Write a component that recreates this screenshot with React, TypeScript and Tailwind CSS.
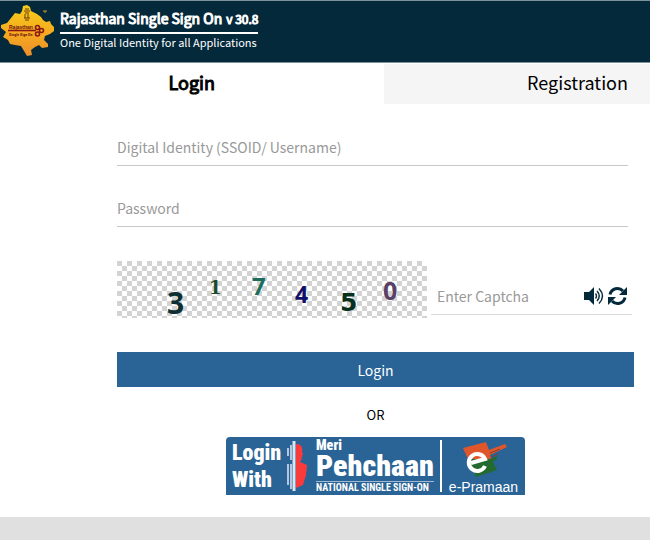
import { useState } from "react";

const CAPTCHA_DIGITS = [
  { value: "3", x: 50, y: 53, size: 30, color: "#0b2f33", font: "Open Sans", weight: 700 },
  { value: "1", x: 92, y: 33, size: 18, color: "#1d4a2c", font: "DejaVu Serif", weight: 700 },
  { value: "7", x: 135, y: 34, size: 24, color: "#1c6e5c", font: "Open Sans", weight: 700 },
  { value: "4", x: 178, y: 42, size: 23, color: "#10106a", font: "Open Sans", weight: 700 },
  { value: "5", x: 223, y: 50, size: 25, color: "#06301c", font: "DejaVu Sans", weight: 700 },
  { value: "0", x: 266, y: 39, size: 25, color: "#5a3f66", font: "Open Sans", weight: 700 },
];

function RajasthanLogo() {
  return (
    <svg viewBox="0 0 54 58" className="h-[58px] w-[54px] shrink-0 self-start" aria-hidden="true">
      <defs>
        <linearGradient id="map" x1="0" y1="0" x2="0" y2="1">
          <stop offset="0" stopColor="#f7cf1b" />
          <stop offset="0.5" stopColor="#f5ae1e" />
          <stop offset="1" stopColor="#ee8f2b" />
        </linearGradient>
      </defs>
      <path
        fill="url(#map)"
        d="M23 5L27 4L30 6L31 10L37 13L41 16L43 19L46 21L50 20L51 23L54 26L54 30L50 33L45 35L44 39L48 43L48 46L42 47L39 44L35 46L31 49L32 54L27 55L24 50L21 45L15 44L10 43L8 39L3 36L6 31L1 27L1 24L7 22L11 17L15 12L20 13L22 10Z"
      />
      <g stroke="#6b3b10" strokeWidth="1" fill="none">
        <path d="M25 8h4M24 10h6M25 12h4M25 13v4M28 13v4M24 17h6M25 19h4" />
      </g>
      <path d="M43 10h4M45 10v2" stroke="#c99a2c" strokeWidth="1" />
      <path d="M8 29.500h28" stroke="#8c1616" strokeWidth="1.6" />
      <g fill="none" stroke="#8c1616" strokeWidth="1.6">
        <circle cx="37.500" cy="26.500" r="2" />
        <circle cx="37.500" cy="33" r="2" />
        <circle cx="41.500" cy="29.500" r="2" />
      </g>
      <text x="9" y="28" fontSize="5" fontWeight="700" fill="#6e1010" fontFamily="Liberation Sans, sans-serif">Rajasthan</text>
      <text x="9" y="35" fontSize="4" fontWeight="700" fill="#6e1010" fontFamily="Roboto Condensed, sans-serif">Single Sign On</text>
    </svg>
  );
}

function CaptchaImage() {
  return (
    <svg viewBox="0 0 310 57" className="h-[57px] w-[310px] shrink-0 overflow-visible" role="img" aria-label="Captcha">
      <defs>
        <pattern id="checker" width="10" height="10" patternUnits="userSpaceOnUse">
          <rect width="10" height="10" fill="#fff" />
          <path d="M0 0h5v5H0zM5 5h5v5H5z" fill="#d3d3d3" />
        </pattern>
      </defs>
      <rect width="310" height="57" fill="url(#checker)" />
      {CAPTCHA_DIGITS.map((digit) => (
        <text
          key={digit.value}
          x={digit.x}
          y={digit.y}
          fontSize={digit.size}
          fontWeight={digit.weight}
          fontFamily={digit.font}
          fill={digit.color}
        >
          {digit.value}
        </text>
      ))}
    </svg>
  );
}

function SpeakerIcon() {
  return (
    <svg viewBox="0 0 20 18" className="h-[18px] w-5" aria-hidden="true">
      <path d="M0 5h5l5-5v18l-5-5H0z" fill="#04293a" />
      <g fill="none" stroke="#04293a" strokeWidth="1.4">
        <path d="M11.500 6.500q2 2.500 0 5M13 4q4.500 5 0 10M15 1.500q7 7.500 0 15" />
      </g>
    </svg>
  );
}

function RefreshIcon() {
  return (
    <svg viewBox="0 0 19 20" className="h-5 w-[19px]" aria-hidden="true">
      <g fill="none" stroke="#04293a" strokeWidth="3">
        <path d="M2 8.500A7.500 7.500 0 0 1 15 5" />
        <path d="M17 11.500A7.500 7.500 0 0 1 4 15" />
      </g>
      <path d="M19 1v8h-8zM0 19v-8h8z" fill="#04293a" />
    </svg>
  );
}

function PeopleIcon() {
  return (
    <svg viewBox="0 0 22 50" className="h-[50px] w-[22px] shrink-0" aria-hidden="true">
      <path d="M8 0v50" stroke="#dbe5f1" strokeWidth="3" />
      <path d="M5 4v15M5 23v25M2 7v8M2 23v21" stroke="#b3c7e0" strokeWidth="2" />
      <path d="M10 3c5 0 7 3 6 8l1 2-1 2c0 3-1 4-2 6l7 3-1 10-3 10-7 3z" fill="#fb3b3b" />
    </svg>
  );
}

function PramaanIcon() {
  return (
    <svg viewBox="0 0 50 38" className="h-[38px] w-[50px]" aria-hidden="true">
      <path d="M4 7L27 1L30 9L46 3L48 6L31 14L32 18H9z" fill="#e0562b" />
      <path d="M9 18H32L38 15L38 18L34 21L38 29L17 36z" fill="#226a30" />
      <path d="M31 12l10-4M32 16l7-3" stroke="#8a3a26" strokeWidth="1" />
      <path d="M12 22L26 18A8.500 8.500 0 1 0 26 25" fill="none" stroke="#fff" strokeWidth="4" />
    </svg>
  );
}

export default function App() {
  const [captcha, setCaptcha] = useState("");

  return (
    <div className="min-h-screen bg-white font-['Noto_Sans_CJK_SC',sans-serif] text-black">
      <header className="flex h-[63px] items-center gap-1.5 border-y border-[#7d939c] bg-[#04293a] text-white">
        <RajasthanLogo />
        <div className="pb-1.5">
          <h1 className="flex items-baseline gap-1 border-b-2 border-white pb-1 text-sm leading-5 [-webkit-text-stroke:1px]">
            Rajasthan Single Sign On <span className="text-xs">v 30.8</span>
          </h1>
          <p className="text-[11px] leading-4">One Digital Identity for all Applications</p>
        </div>
      </header>

      <nav className="grid grid-cols-[59%_1fr] text-lg leading-9">
        <button type="button" className="mt-px pb-1 [-webkit-text-stroke:1px]">Login</button>
        <button type="button" className="mt-px bg-[#f5f5f5] pr-[22px] pb-1 text-right">Registration</button>
      </nav>

      <form className="pt-[25px] pr-4 pl-[117px] text-sm" onSubmit={(event) => event.preventDefault()}>
        <div className="mr-1.5 grid gap-6">
          <input
            type="text"
            aria-label="Digital Identity"
            placeholder="Digital Identity (SSOID/ Username)"
            className="h-[37px] w-full border-b border-[#c8c8c8] outline-none placeholder:text-[#999]"
          />
          <input
            type="password"
            aria-label="Password"
            placeholder="Password"
            className="h-[37px] w-full border-b border-[#c8c8c8] outline-none placeholder:text-[#999]"
          />
        </div>

        <div className="mt-[34px] mr-0.5 flex gap-1">
          <CaptchaImage />
          <div className="mt-4 flex h-[38px] min-w-0 flex-1 items-center gap-1 border-b border-[#dcdcdc] pr-[5px] pl-1.5">
            <input
              type="text"
              aria-label="Captcha"
              placeholder="Enter Captcha"
              value={captcha}
              onChange={(event) => setCaptcha(event.currentTarget.value)}
              className="min-w-0 flex-1 outline-none placeholder:text-[#999]"
            />
            <button type="button" aria-label="Play captcha"><SpeakerIcon /></button>
            <button type="button" aria-label="Refresh captcha"><RefreshIcon /></button>
          </div>
        </div>

        <button type="submit" className="mt-[34px] h-[35px] w-full bg-[#2a6496] text-white">Login</button>
        <p className="mt-4 text-center text-[13px] leading-6">OR</p>

        <button
          type="button"
          className="mx-auto mt-2.5 flex h-[58px] w-[299px] items-center rounded-t bg-[#2a6496] pl-1.5 font-['Roboto_Condensed',Roboto,sans-serif] text-white"
        >
          <span className="w-[54px] text-left text-[22px] leading-[27px] font-black">Login With</span>
          <PeopleIcon />
          <span className="ml-2 flex w-[118px] flex-col text-left font-black">
            <span className="text-sm leading-3">Meri</span>
            <span className="text-[30px] leading-[30px]">Pehchaan</span>
            <span className="border-t border-[#9db9d4] text-[10px] leading-3 font-bold whitespace-nowrap">NATIONAL SINGLE SIGN-ON</span>
          </span>
          <span className="ml-1.5 h-[52px] w-0.5 bg-white" />
          <span className="flex flex-1 flex-col items-center pt-1 font-['Liberation_Sans',sans-serif] text-sm leading-4">
            <PramaanIcon />
            e-Pramaan
          </span>
        </button>
      </form>

      <footer className="mt-[22px] h-[23px] bg-[#e0e0e0]" />
    </div>
  );
}
